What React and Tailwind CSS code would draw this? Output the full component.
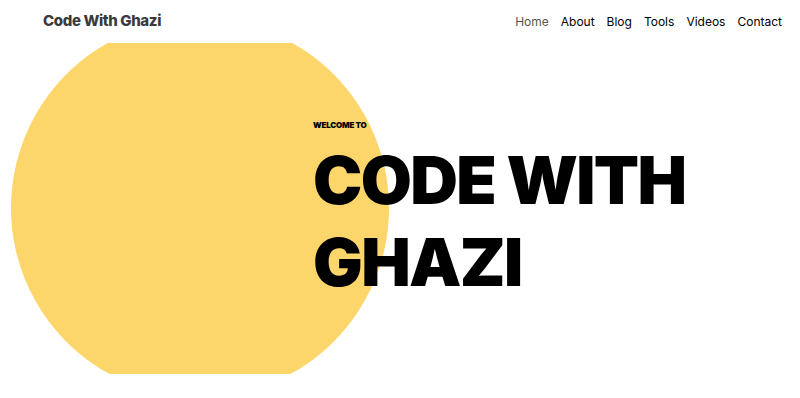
import React from "react";

const links = ["Home", "About", "Blog", "Tools", "Videos", "Contact"];

const App = () => {
  return (
    <div className="w-full h-[398px] bg-white overflow-hidden font-['Inter',sans-serif]">
      <header className="h-[43px] flex items-center justify-between pl-[43px] pr-[18px]">
        <p className="text-[15px] font-extrabold text-[#3a3a3c] tracking-tight">
          Code With Ghazi
        </p>
        <nav className="flex items-center gap-[12px] text-[12px] text-black">
          {links.map((l, i) => (
            <a
              key={l}
              className={i === 0 ? "text-[#555]" : "text-black"}
            >
              {l}
            </a>
          ))}
        </nav>
      </header>

      <section className="relative h-[331px] overflow-hidden">
        <div className="absolute left-[11px] top-[-24px] w-[378px] h-[378px] rounded-full bg-[#fcd66b]" />
        <div className="relative pl-[313px] pt-[78px]">
          <p className="text-[8px] font-black text-black tracking-tight leading-none">
            WELCOME TO
          </p>
          <h1 className="mt-[10px] text-[66px] font-black text-black leading-[82px] tracking-tight">
            CODE WITH
            <br />
            GHAZI
          </h1>
        </div>
      </section>
    </div>
  );
};

export default App;
